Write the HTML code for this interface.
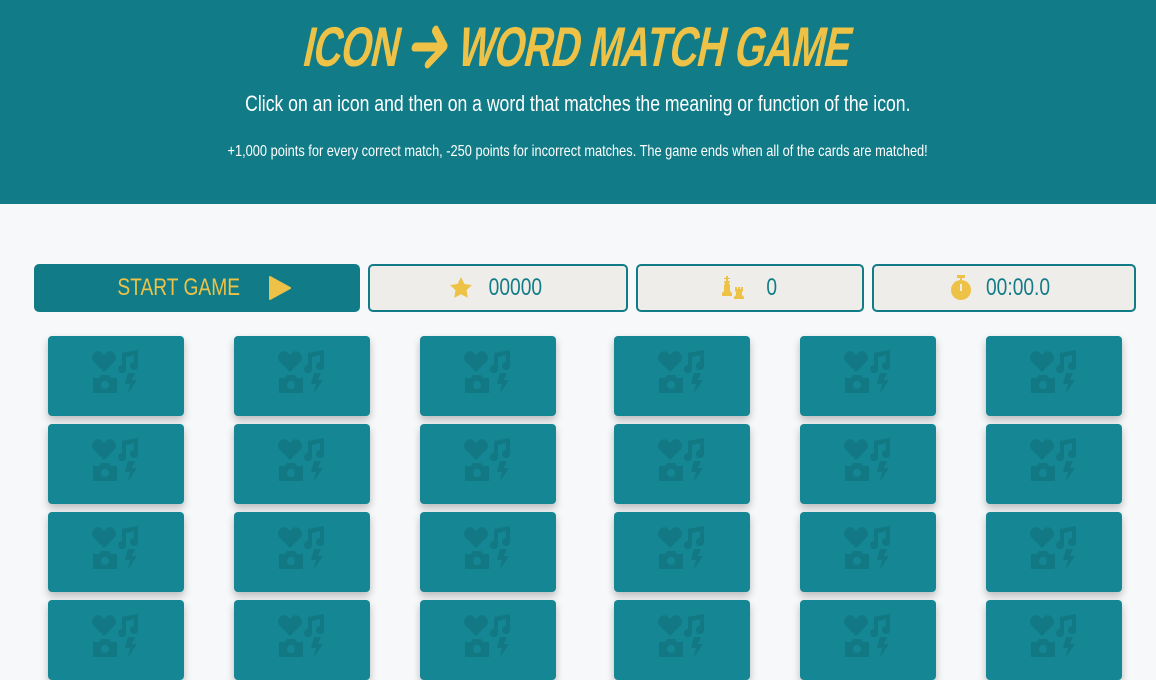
<!DOCTYPE html>
<html><head><meta charset="utf-8"><style>
body{margin:0;width:1156px;height:618px;overflow:hidden;background:#f7f8fa;font-family:"Liberation Sans",sans-serif;position:relative}
.hdr{position:absolute;left:0;top:0;width:1156px;height:204px;background:#117c87;text-align:center;color:#fff}
.t{position:absolute;top:14px;left:0;width:1156px;text-align:center;color:#edc246;font-weight:bold;font-size:56px;letter-spacing:-1px}
.t span{display:inline-block;transform:skewX(-12deg) scaleX(.7);white-space:nowrap}
.t svg{vertical-align:-4px}
.s1,.s2{position:absolute;left:0;width:1156px;text-align:center}
.s1 span,.s2 span{display:inline-block;transform:scaleX(.8);white-space:nowrap}
.s1{top:91px;font-size:22px}
.s2{top:143px;font-size:16px}
.box{position:absolute;top:264px;border:2px solid #117c87;border-radius:5px;background:#efedea;color:#117c87;font-size:24px;display:flex;align-items:center;justify-content:center;box-sizing:border-box;height:48px}
.box span.n{display:inline-block;transform:scaleX(.8)}
.start{background:#117c87;color:#edc246}
.card{position:absolute;width:136px;height:80px;background:#158693;border-radius:4px;box-shadow:0 4px 8px rgba(0,0,0,.25)}
.card svg{position:absolute;left:44px;top:14px}
</style></head><body>
<div class="hdr">
<div class="t"><span>ICON <svg width="56" height="46" viewBox="0 0 56 46"><path d="M6 23 H46 M30 6 L48 23 L30 40" fill="none" stroke="#edc246" stroke-width="9" stroke-linecap="round" stroke-linejoin="round"/></svg> WORD MATCH GAME</span></div>
<div class="s1"><span>Click on an icon and then on a word that matches the meaning or function of the icon.</span></div>
<div class="s2"><span>+1,000 points for every correct match, -250 points for incorrect matches. The game ends when all of the cards are matched!</span></div>
</div>
<div class="box start" style="left:34px;width:326px"><span class="n">START GAME</span><svg width="24" height="26" style="margin-left:12px" viewBox="0 0 24 26"><path d="M2 2 L22 13 L2 24 Z" fill="#edc246" stroke="#edc246" stroke-width="2" stroke-linejoin="round"/></svg></div>
<div class="box" style="left:368px;width:260px"><svg width="26" height="24" viewBox="0 0 24 24" style="margin-right:8px"><path d="M12 1l3.4 7 7.6 1-5.5 5.3 1.3 7.6L12 18.3 5.2 21.9l1.3-7.6L1 9l7.6-1z" fill="#edc246"/></svg><span class="n">00000</span></div>
<div class="box" style="left:636px;width:228px"><svg width="26" height="26" viewBox="0 0 26 26" style="margin-right:18px"><path d="M6 1h1v2h2v1H7v2h2l-1 3 1 1v6l2 2v3H1v-3l2-2v-6l1-1-1-3h2V4H3V3h2V1z" fill="#edc246"/><path d="M14 12h2v2h1v-2h2v2h1v-2h2v4l-1 1v3l2 2v2H13v-2l2-2v-3l-1-1z" fill="#edc246"/></svg><span class="n">0</span></div>
<div class="box" style="left:872px;width:264px"><svg width="22" height="26" viewBox="0 0 22 26" style="margin-right:6px"><rect x="7" y="0" width="8" height="3" fill="#edc246"/><rect x="10" y="2" width="2" height="4" fill="#edc246"/><circle cx="11" cy="15" r="10" fill="#edc246"/><rect x="10" y="9" width="2" height="7" fill="#efedea"/></svg><span class="n">00:00.0</span></div>
<div id="g"></div>
<script>
var xs=[48,234,420,614,800,986],ys=[336,424,512,600],h='';
var ic='<svg width="50" height="44" viewBox="0 0 50 44" fill="#127883"><path d="M12 22 L1 11 C-2 5 4-1 9 2 L12 5 L15 2 C20-1 26 5 23 11Z"/><path d="M30 3 L46 0 V16 A4 4 0 1 1 42 12 V5 L34 7 V19 A4 4 0 1 1 30 15Z"/><path d="M1 28 h6 l2-3 h8 l2 3 h6 v15 H1Z"/><circle cx="13" cy="35" r="4" fill="#158693"/><path d="M36 23 h7 l-3 7 h5 l-9 13 2-9 h-5z"/></svg>';
ys.forEach(function(y){xs.forEach(function(x){h+='<div class="card" style="left:'+x+'px;top:'+y+'px">'+ic+'</div>';});});
document.getElementById('g').innerHTML=h;
</script>
</body></html>
